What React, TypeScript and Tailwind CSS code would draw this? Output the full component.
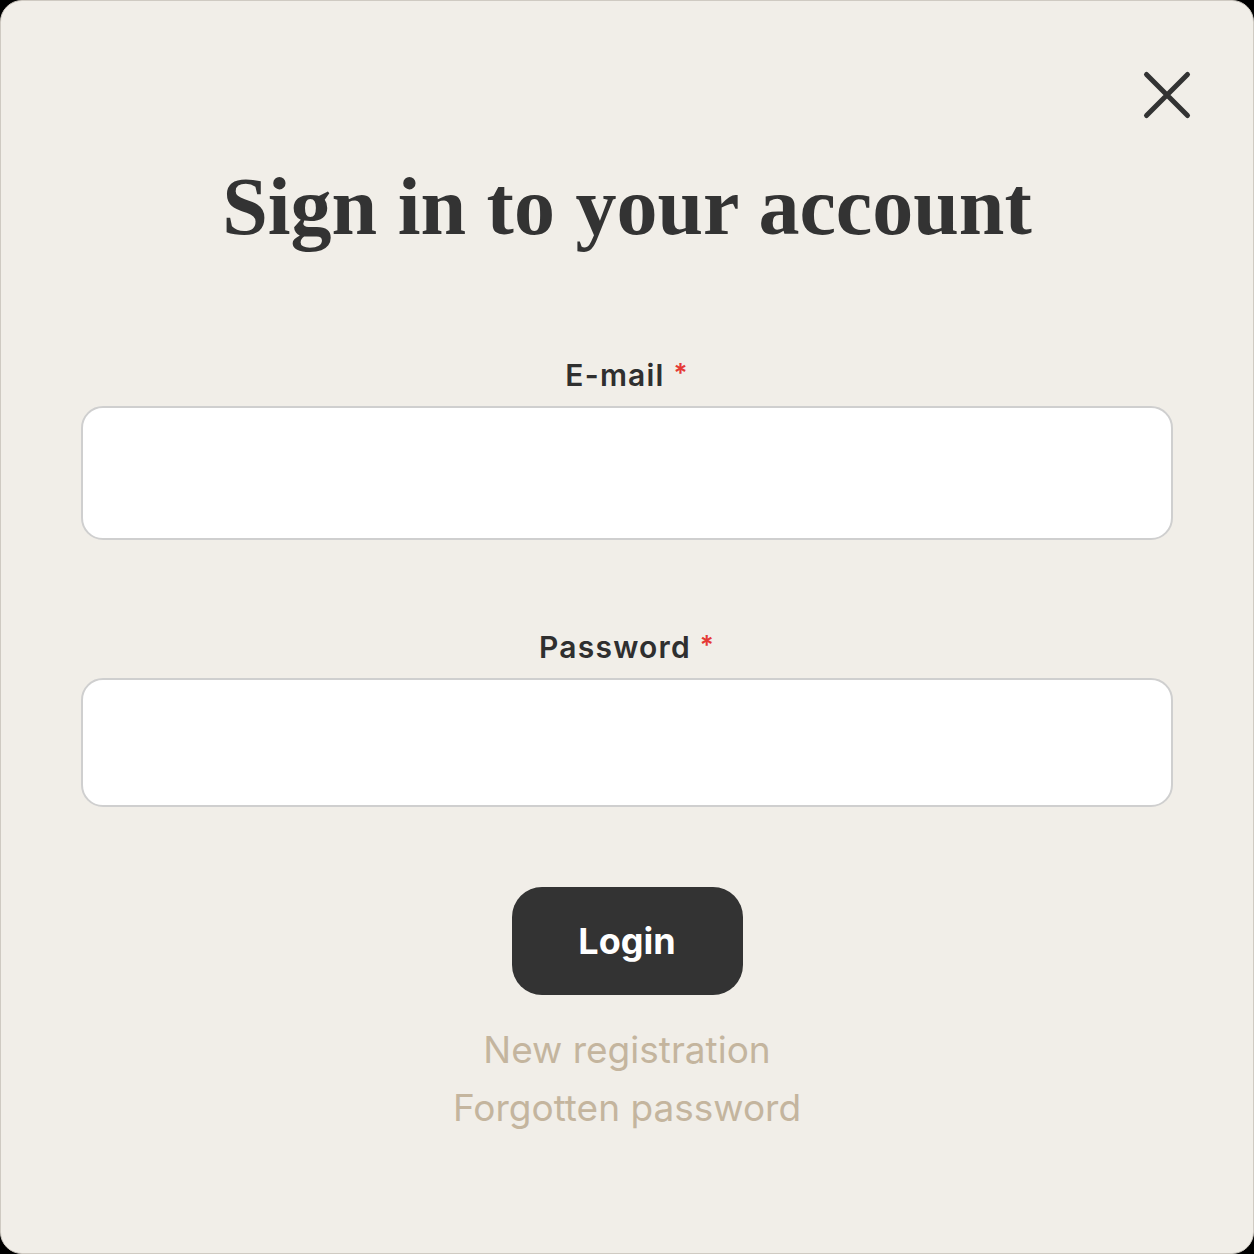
const sans = { fontFamily: 'Inter, "Noto Sans", sans-serif' };

function Field({ label, height }: { label: string; height: string }) {
  return (
    <div className="flex flex-col items-center">
      <label className="text-[30px] font-semibold leading-none tracking-[0.04em] text-[#2f2f2f]">
        {label} <span className="align-top text-[26px] text-[#e53935]">*</span>
      </label>
      <input
        className={`mt-[16px] w-full ${height} rounded-[22px] border-2 border-[#cfcfcf] bg-white outline-none`}
      />
    </div>
  );
}

export default function App() {
  return (
    <div className="h-[1254px] w-[1254px] bg-black">
      <div
        className="relative flex h-full w-full flex-col items-center rounded-[22px] border border-[#cfcac2] bg-[#f1eee8] px-[80px]"
        style={sans}
      >
        {/* close */}
        <button className="absolute left-[1141px] top-[69px] text-[#333333]">
          <svg width="50" height="50" viewBox="0 0 50 50" fill="none" stroke="currentColor" strokeWidth="5" strokeLinecap="round">
            <path d="M4.5 4.5 L45.5 45.5 M45.5 4.5 L4.5 45.5" />
          </svg>
        </button>

        <h1
          className="mt-[165px] text-[82px] font-bold leading-none text-[#333333]"
          style={{ fontFamily: '"Liberation Serif", "DejaVu Serif", serif' }}
        >
          Sign in to your account
        </h1>

        <form className="mt-[112px] flex w-full flex-col gap-[92px]">
          <Field label="E-mail" height="h-[134px]" />
          <Field label="Password" height="h-[129px]" />
        </form>

        <button className="mt-[80px] h-[108px] w-[231px] rounded-[30px] bg-[#333333] text-[36px] font-bold text-white">
          Login
        </button>

        <div className="mt-[26px] flex flex-col items-center text-[37px] leading-[58px] text-[#c4b59e]">
          <a>New registration</a>
          <a>Forgotten password</a>
        </div>
      </div>
    </div>
  );
}
